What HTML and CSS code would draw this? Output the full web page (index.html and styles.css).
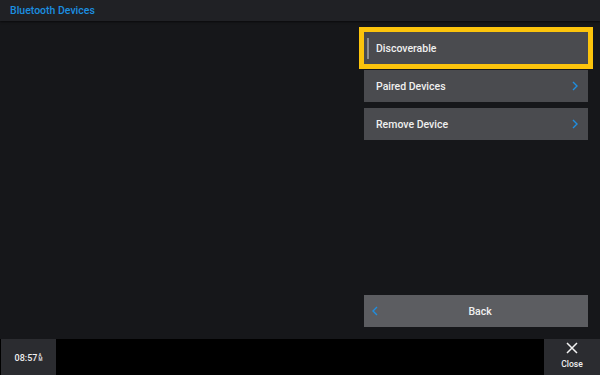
FILE: index.html
```html
<!DOCTYPE html>
<html>
<head>
<meta charset="utf-8">
<link rel="stylesheet" href="styles.css">
</head>
<body>
<div class="app">
  <header class="topbar"><span class="title">Bluetooth Devices</span></header>
  <main class="main">
    <div class="canvas"></div>
    <nav class="panel">
      <div class="menu">
        <div class="btn focused"><span class="toggle"></span><span class="label">Discoverable</span></div>
        <div class="btn"><span class="label">Paired Devices</span>
          <svg class="chev" width="6" height="10" viewBox="0 0 6 10"><path d="M1 1 L5 5 L1 9" fill="none" stroke="#1f8ee0" stroke-width="1.4"/></svg>
        </div>
        <div class="btn"><span class="label">Remove Device</span>
          <svg class="chev" width="6" height="10" viewBox="0 0 6 10"><path d="M1 1 L5 5 L1 9" fill="none" stroke="#1f8ee0" stroke-width="1.4"/></svg>
        </div>
      </div>
      <div class="btn back">
        <svg class="chev-left" width="6" height="10" viewBox="0 0 6 10"><path d="M5 1 L1 5 L5 9" fill="none" stroke="#1f8ee0" stroke-width="1.4"/></svg>
        <span class="label">Back</span>
      </div>
    </nav>
  </main>
  <footer class="bottombar">
    <div class="clock">08:57<span class="ampm"><span>A</span><span>M</span></span></div>
    <div class="close">
      <svg width="12" height="12" viewBox="0 0 12 12"><path d="M1 1 L11 11 M11 1 L1 11" stroke="#f2f2f2" stroke-width="1.5"/></svg>
      <span>Close</span>
    </div>
  </footer>
</div>
</body>
</html>
```

FILE: styles.css
```css
* { box-sizing: border-box; }
html, body { margin: 0; padding: 0; background: #16171a; }
body { font-family: Roboto, "Liberation Sans", Arial, sans-serif; }
.app { width: 600px; height: 375px; display: flex; flex-direction: column; background: #16171a; }
.topbar {
  height: 21px; flex: none; background: #202125; display: flex; align-items: center;
  padding-left: 10px; box-shadow: 0 1px 2px rgba(0,0,0,0.6); position: relative; z-index: 1;
}
.title { color: #1b8fe0; font-size: 10.5px; font-weight: 500; }
.main { flex: 1; display: flex; min-height: 0; }
.canvas { flex: 1; }
.panel {
  width: 224px; margin-right: 12px; display: flex; flex-direction: column;
  justify-content: space-between; padding: 11px 0 12px;
}
.menu { display: flex; flex-direction: column; gap: 6px; }
.btn {
  height: 32px; background: #4a4b4f; display: flex; align-items: center;
  padding: 0 10px 0 12px; color: #f0f0f0; font-size: 10.5px; font-weight: 500;
  position: relative;
}
.btn .label { flex: 1; }
.focused { outline: 5px solid #fcc40c; }
.toggle { width: 2px; height: 21px; background: #8c8d91; margin: 0 7px 0 -9px; }
.back { background: #5c5d61; padding-left: 8px; }
.back .label { text-align: center; margin-right: -4px; }
.bottombar { height: 36px; flex: none; background: #000; display: flex; justify-content: space-between; }
.clock {
  width: 55px; margin-left: 1px; background: #2b2c30; color: #f0f0f0; font-size: 9px; font-weight: 500;
  display: flex; align-items: center; justify-content: center; padding-top: 1px;
}
.ampm { display: inline-flex; flex-direction: column; font-size: 4.5px; line-height: 4px; margin-left: 1px; }
.close {
  width: 56px; background: #2b2c30; color: #f0f0f0; font-size: 8.5px; font-weight: 500;
  display: flex; flex-direction: column; align-items: center; padding-top: 3px; gap: 5px;
}
```
